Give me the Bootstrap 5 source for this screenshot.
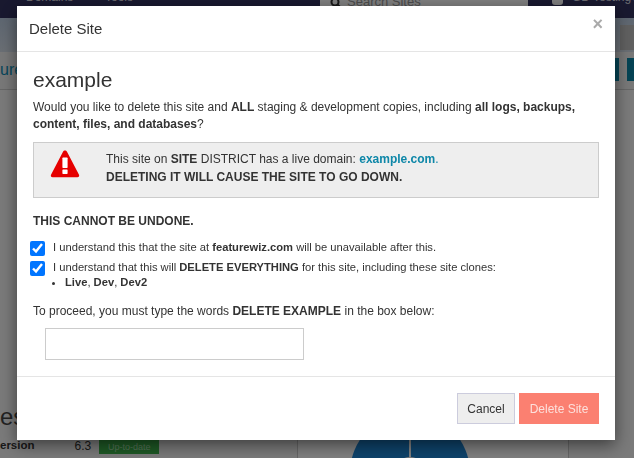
<!DOCTYPE html>
<html lang="en"><head><meta charset="utf-8">
<title>Delete Site</title>
<link href="https://cdn.jsdelivr.net/npm/bootstrap@5.3.0/dist/css/bootstrap.min.css" rel="stylesheet">
<style>
html,body{height:458px;overflow:hidden}
body{font-family:"Liberation Sans",Arial,sans-serif;font-size:12px;color:#333;background:#f4f4f4}
.page-top{height:18px;background:#32325f;color:#d8d8e0;overflow:hidden;font-size:12px}
.top-inner{margin-top:-10px;height:28px;align-items:flex-start}
.top-inner>*{flex:none}
.top-link{line-height:14px;width:79px}
.top-first{margin-left:26px}
.search-box{width:208px;height:28px;background:#fff;margin-left:136px;color:#999;font-size:13px;line-height:24px;padding-left:27px;gap:0}
.search-ico{margin-left:-17px;margin-right:6px;margin-top:3px;flex:none}
.top-user{margin-left:24px;gap:9px;line-height:14px;white-space:nowrap}
.top-avatar{width:11px;height:15px;background:#fff;border-radius:3px;flex:none}
.page-strip{height:34px;background:linear-gradient(#bccde2,#d4dde8);justify-content:flex-end;padding-top:7px}
.strip-box{width:14px;height:25px;background:#c0c0c0}
.page-head{height:38px;background:#f0f0f0;border-bottom:1px solid #ccc;color:#0d8cb5;font-size:16px;align-items:center}
.head-left{line-height:20px;margin-top:-2px}
.teal-btn{height:23px;background:#0a87a8;margin-top:-2px}
.teal-a{width:9px;margin-left:610px}
.teal-b{width:7px;margin-left:8px}
.lower-wrap{padding-top:314px;height:368px;align-items:flex-start}
.lower-left{width:297px;flex:none}
.ghost-heading{font-size:24px;line-height:28px;font-weight:400;margin:-1px 0 8px;color:#444}
.ghost-row{height:16px;font-size:11.5px;font-weight:700;align-items:center;color:#333}
.ghost-label{margin-top:-3px}
.ghost-ver{font-weight:400;margin-left:40px;margin-right:8px;font-size:12px;margin-top:-3px}
.ghost-badge{background:#3cb24a;color:#a9e0ae;font-size:9px;font-weight:400;width:60px;height:14px;line-height:14px;text-align:center}
.ghost-panel{width:272px;height:69px;border-left:1px solid #ccc;border-right:1px solid #ccc;background:#fff;display:flex;justify-content:center;padding-right:46px}
.donut{flex:none}
.modal-backdrop.show{opacity:.5}
.del-dialog{width:598px;max-width:598px;margin:6px 0 0 17px}
.del-content{border:0;border-radius:0;height:434px;box-shadow:0 5px 15px rgba(0,0,0,.5)}
.del-header{height:46px;padding:0 12px;border-bottom:1px solid #e5e5e5;border-radius:0}
.del-title{font-size:15px;line-height:20px;color:#333;font-weight:400}
.del-x{font-size:18px;font-weight:700;color:#aaa;line-height:18px;margin-top:-9px;background:none;border:0;padding:0}
.del-body{padding:15px 16px 0;height:325px}
.site-name{font-size:21px;line-height:26px;font-weight:400;margin:0 0 6px;color:#333}
.intro{line-height:17px;margin-bottom:9px}
.warn-box{height:56px;background:#eee;border:1px solid #ccc;padding:7px 0 0 16px;margin-bottom:15px}
.warn-icon{flex:none}
.warn-text{margin-left:26px;line-height:18px}
.warn-link{color:#0e87a8;font-weight:700;text-decoration:none}
.warn-dot{color:#0e87a8}
.undone{line-height:16px;margin-bottom:12px;font-weight:700}
.chk-row{gap:8px;margin-bottom:5px;margin-left:-3px;font-size:11.2px;height:15px}
.chk-box{width:15px;height:15px;margin:0;flex:none}
.chk-text{line-height:14px;margin-top:-1px}
.clones{font-size:11.2px;line-height:13px;margin:-5px 0 14px;padding-left:32px;list-style:disc}
.proceed{line-height:16px;margin-bottom:9px}
.type-box{width:259px;height:32px;margin-left:12px;border:1px solid #ccc;border-radius:0;background:#fff;padding:0 8px;font-size:12px}
.del-footer{height:64px;padding:0 16px;border-top:1px solid #e5e5e5;border-radius:0;gap:4px;justify-content:flex-end;margin-top:-1px}
.del-footer>*{margin:0}
.btn-cancel{height:31px;width:58px;padding:0;font-size:12px;background:#eee;border:1px solid #ccd;border-radius:0;color:#333}
.btn-del{height:31px;width:80px;padding:0;font-size:12px;border-radius:0}
.btn-del:disabled{background:#fb8071;border:1px solid #fb8071;color:#fde0dc;opacity:1}
</style></head>
<body>
<div class="page-top"><div class="d-flex top-inner">
<span class="top-link top-first">Domains</span><span class="top-link">Tools</span>
<div class="search-box d-flex"><svg class="search-ico" width="11" height="18" viewBox="0 0 11 18" aria-hidden="true"><circle cx="5" cy="9" r="3.5" fill="none" stroke="#333" stroke-width="2"/><path d="M7.5 11.5l3 3" stroke="#333" stroke-width="2"/></svg><span>Search Sites</span></div>
<div class="d-flex top-user"><span class="top-avatar"></span><span>GD Testing Agency</span></div>
</div></div>
<div class="page-strip d-flex"><div class="strip-box"></div></div>
<div class="page-head d-flex"><span class="head-left position-absolute">ure</span><div class="teal-btn teal-a"></div><div class="teal-btn teal-b"></div></div>
<div class="d-flex lower-wrap">
<div class="lower-left">
<h3 class="ghost-heading">es</h3>
<div class="d-flex ghost-row"><span class="ghost-label">ersion</span><span class="ghost-ver">6.3</span><span class="ghost-badge">Up-to-date</span></div>
</div>
<div class="ghost-panel"><svg class="donut" width="120" height="69" viewBox="0 0 120 69" aria-hidden="true"><circle cx="60" cy="69" r="60" fill="#1c86d6"/><rect x="59" y="0" width="2" height="69" fill="#fff"/><circle cx="60" cy="69" r="16" fill="#fff"/></svg></div>
</div>
<div class="modal-backdrop show"></div>
<div class="modal d-block" tabindex="-1" role="dialog">
<div class="modal-dialog del-dialog">
<div class="modal-content del-content">
<div class="modal-header del-header d-flex justify-content-between align-items-center">
<h5 class="modal-title del-title">Delete Site</h5>
<button type="button" class="del-x" aria-label="Close">×</button>
</div>
<div class="modal-body del-body">
<h3 class="site-name">example</h3>
<p class="intro">Would you like to delete this site and <b>ALL</b> staging &amp; development copies, including <b>all logs, backups, content, files, and databases</b>?</p>
<div class="warn-box d-flex align-items-start">
<svg class="warn-icon" width="30" height="28" viewBox="0 0 30 28" aria-hidden="true"><path d="M15 .5c.9 0 1.6.5 2 1.2l12 23c.6 1.2-.2 2.6-1.6 2.6H2.6c-1.4 0-2.2-1.4-1.6-2.6l12-23c.4-.7 1.1-1.2 2-1.2z" fill="#e60000"/><rect x="12.4" y="7.5" width="5.2" height="10.5" rx=".7" fill="#fff"/><rect x="12.4" y="19.4" width="5.2" height="4.6" rx=".7" fill="#fff"/></svg>
<div class="warn-text">This site on <b>SITE</b> DISTRICT has a live domain: <a class="warn-link" href="#">example.com</a><span class="warn-dot">.</span><br><b>DELETING IT WILL CAUSE THE SITE TO GO DOWN.</b></div>
</div>
<p class="undone">THIS CANNOT BE UNDONE.</p>
<div class="d-flex chk-row"><input class="chk-box" type="checkbox" checked><span class="chk-text">I understand this that the site at <b>featurewiz.com</b> will be unavailable after this.</span></div>
<div class="d-flex chk-row"><input class="chk-box" type="checkbox" checked><span class="chk-text">I understand that this will <b>DELETE EVERYTHING</b> for this site, including these site clones:</span></div>
<ul class="clones"><li><b>Live</b>, <b>Dev</b>, <b>Dev2</b></li></ul>
<p class="proceed">To proceed, you must type the words <b>DELETE EXAMPLE</b> in the box below:</p>
<input class="type-box d-block" type="text">
</div>
<div class="modal-footer del-footer">
<button type="button" class="btn btn-cancel">Cancel</button>
<button type="button" class="btn btn-del" disabled>Delete Site</button>
</div>
</div></div></div>
</body></html>
